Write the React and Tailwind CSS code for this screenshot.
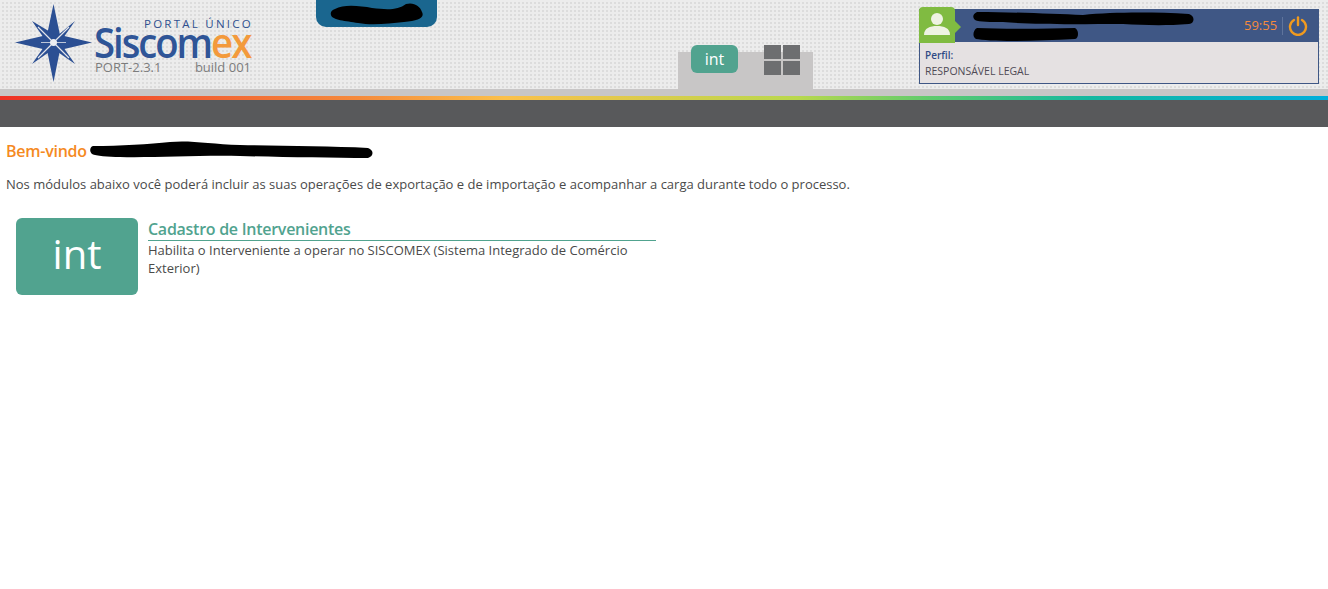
import React from "react";

const font = "font-['Open_Sans',_sans-serif]";

// compass star of the Siscomex logo
function Star() {
  return (
    <svg width="78" height="78" viewBox="0 0 78 78" className="shrink-0">
      <g fill="#2b4f93">
        <path d="M38.5 0 L45 31 L77 38.5 L45 46 L38.5 78 L32 46 L0 38.5 L32 31 Z" />
        <path d="M17 17 L42 32 L60 17 L45 38.5 L60 60 L38.5 45 L17 60 L32 38.5 Z" />
      </g>
      <g stroke="#e3e5ea" strokeWidth="1.2" fill="none">
        <path d="M23 23 L36 36 M54 23 L41 36 M23 54 L36 41 M54 54 L41 41" />
        <path d="M26 38.5 L51 38.5" strokeWidth="0.8" />
      </g>
      <circle cx="38.5" cy="38.5" r="3.5" fill="#eceef2" />
    </svg>
  );
}

// the black scribbles covering names in the screenshot
function Scribble({ w, h, d }) {
  return (
    <svg width={w} height={h} viewBox={`0 0 ${w} ${h}`} className="block">
      <path d={d} fill="#000" />
    </svg>
  );
}

function App() {
  return (
    <div className={`${font} min-h-[589px] bg-white text-[13px] text-[#4a4a4a]`}>
      {/* header */}
      <div className="flex h-[89px] bg-[#ececec] bg-[linear-gradient(to_right,#ececec_50%,transparent_50%),linear-gradient(to_bottom,#ececec_50%,#dcdcdc_50%)] bg-[length:4px_4px]">
        {/* logo */}
        <div className="ml-[15px] mt-[4px] flex h-[78px] w-[240px] shrink-0 items-start">
          <Star />
          <div className="flex w-[158px] shrink-0 flex-col pl-[1px]">
            <div className="-mr-[2px] mt-[13px] h-[14px] whitespace-nowrap text-right text-[11.5px] leading-[14px] tracking-[2.25px] text-[#2f4f8f]">PORTAL ÚNICO</div>
            <div className="-mt-[8px] h-[38px] origin-left scale-x-[0.935] whitespace-nowrap text-[41px] font-semibold leading-[38px] tracking-[-2.2px] text-[#2f5597]">
              Siscom<span className="text-[#f39a3c]">ex</span>
            </div>
            <div className="-mt-[2px] flex justify-between whitespace-nowrap pl-[1px] text-[13px] leading-[16px] text-[#7c7c7c]">
              <span>PORT-2.3.1</span>
              <span>build 001</span>
            </div>
          </div>
        </div>

        {/* environment tab */}
        <div className="ml-[61px] flex h-[27px] w-[121px] shrink-0 items-center justify-center rounded-b-[10px] bg-[#1a668f]">
          <Scribble w="94" h="22" d="M5 6 C14 1 30 3 42 5 C58 7 68 7 76 1 C84 -1 90 3 92 9 C95 15 88 18 74 19 C60 20 44 23 28 20 C16 18 2 17 1 12 C0 9 2 7 5 6 Z" />
        </div>

        {/* module tabs */}
        <div className="ml-[241px] mt-[52px] flex h-[37px] w-[135px] shrink-0 bg-[#c8c6c6]">
          <div className="-mt-[7px] ml-[13px] flex h-[28px] w-[47px] items-center justify-center rounded-[6px] bg-[#51a38f] text-[16px] text-white">int</div>
          <div className="-mt-[7px] ml-[26px] grid h-[30px] w-[36px] grid-cols-[17px_17px] grid-rows-[14px_14px] gap-x-[2px] gap-y-[2px]">
            <div className="bg-[#6d6e70]"></div>
            <div className="bg-[#6d6e70]"></div>
            <div className="bg-[#6d6e70]"></div>
            <div className="bg-[#6d6e70]"></div>
          </div>
        </div>

        {/* user box */}
        <div className="ml-[106px] mt-[9px] flex h-[75px] w-[400px] shrink-0 flex-col border border-[#3f5785] bg-[#e5e1e2]">
          <div className="flex h-[32px] shrink-0 items-center bg-[#3f5785]">
            <div className="relative -mt-[3px] h-[36px] w-[36px] shrink-0 -translate-x-[1px] rounded-tl-[4px] rounded-tr-[4px] bg-[#80bb41]">
              <svg width="28" height="24" viewBox="0 0 28 24" className="absolute left-[4px] top-[6px]">
                <circle cx="14" cy="6" r="6" fill="#eef3e2" />
                <path d="M1 22 C1 15 7 13 14 13 C21 13 27 15 27 22 Z" fill="#eef3e2" />
              </svg>
              <div className="absolute -right-[6px] top-[14px] h-0 w-0 border-y-[6px] border-l-[6px] border-y-transparent border-l-[#80bb41]"></div>
            </div>
            <div className="ml-[17px] flex w-[221px] shrink-0 flex-col gap-[2px]">
              <Scribble w="221" h="14" d="M4 0 C40 0 80 2 110 3 C140 0 180 0 216 2 C222 4 222 11 216 12 C190 14 170 13 150 12 C110 12 60 13 30 10 C18 10 6 10 2 8 C-1 5 0 2 4 0 Z" />
              <Scribble w="106" h="13" d="M4 0 C30 1 70 1 102 0 C106 2 106 10 102 11 C80 12 60 13 40 13 C24 13 8 12 3 11 C-1 9 0 2 4 0 Z" />
            </div>
            <span className="ml-[50px] text-[13px] text-[#f58a3c]">59:55</span>
            <div className="ml-[5px] h-[18px] w-px bg-[#5f749c]"></div>
            <svg width="20" height="20" viewBox="0 0 20 20" className="ml-[5px]" fill="none" stroke="#f09a1f" strokeWidth="2.4" strokeLinecap="round">
              <path d="M6 4 A8 8 0 1 0 14 4" />
              <path d="M10 1.5 L10 9" />
            </svg>
          </div>
          <div className="pl-[5px] pt-[5px] text-[10px] leading-[16px]">
            <div className="font-semibold text-[#2f4a85]">Perfil:</div>
            <div className="text-[10.5px] text-[#4f4a55]">RESPONSÁVEL LEGAL</div>
          </div>
        </div>
      </div>

      {/* bars */}
      <div className="h-[7px] bg-[#c8c6c6]"></div>
      <div className="h-[4px] bg-[linear-gradient(to_right,#ee3124_0%,#f58a3c_27%,#fbc04a_38%,#b9d84d_60%,#5fcb6d_70%,#14b8a0_82%,#00aedb_100%)]"></div>
      <div className="h-[27px] bg-[#58595b]"></div>

      {/* welcome */}
      <div className="px-[6px] pt-[13px]">
        <div className="flex h-[22px] items-center text-[16px] font-semibold tracking-[-0.25px] text-[#f58a1f]">
          <span>Bem-vindo</span>
          <div className="ml-[3px]">
            <Scribble w="283" h="20" d="M3 5 C30 5 60 3 80 1 C100 -1 120 3 150 4 C190 5 240 5 278 7 C284 9 284 15 278 17 C240 17 190 16 150 15 C110 14 60 17 30 16 C18 16 6 15 2 13 C-1 10 0 6 3 5 Z" />
          </div>
        </div>
        <p className="mt-[13px] text-[13px] leading-[18px]">Nos módulos abaixo você poderá incluir as suas operações de exportação e de importação e acompanhar a carga durante todo o processo.</p>

        {/* module card */}
        <div className="ml-[10px] mt-[25px] flex">
          <div className="flex h-[77px] w-[122px] shrink-0 items-center justify-center rounded-[6px] bg-[#51a38f] pb-[5px] text-[40px] text-white">int</div>
          <div className="ml-[10px] w-[508px]">
            <div className="h-[23px] border-b border-[#51a38f] text-[16px] font-semibold leading-[22px] tracking-[-0.27px] text-[#51a38f]">Cadastro de Intervenientes</div>
            <p className="text-[13px] leading-[18px]">Habilita o Interveniente a operar no SISCOMEX (Sistema Integrado de Comércio Exterior)</p>
          </div>
        </div>
      </div>
    </div>
  );
}

export default App;
